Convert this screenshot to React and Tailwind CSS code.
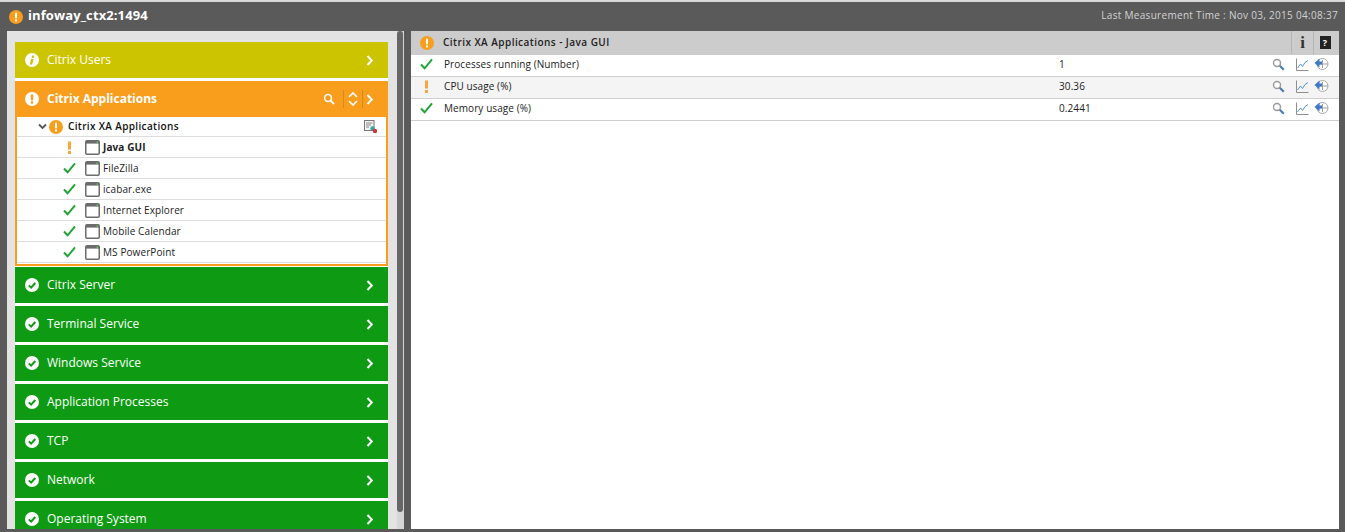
const F = "font-['Open_Sans','Noto_Sans',sans-serif]";

function Warn({ size = 14 }) {
  return (
    <svg width={size} height={size} viewBox="0 0 14 14" className="shrink-0">
      <circle cx="7" cy="7" r="7" fill="#f99d1c" />
      <rect x="6" y="2.6" width="2" height="5.8" rx="0.8" fill="#fff" />
      <rect x="6" y="9.4" width="2" height="2" fill="#fff" />
    </svg>
  );
}
function WhiteIcon({ kind }) {
  const c = kind === "warn" ? "#f99d1c" : kind === "info" ? "#cdc400" : "#0e9a12";
  return (
    <svg width="14" height="14" viewBox="0 0 14 14" className="shrink-0">
      <circle cx="7" cy="7" r="7" fill="#fff" />
      {kind === "warn" && (
        <>
          <rect x="5.8" y="2.4" width="2.4" height="6" rx="0.8" fill={c} />
          <rect x="5.8" y="9.4" width="2.4" height="2.2" fill={c} />
        </>
      )}
      {kind === "info" && (
        <>
          <path d="M6 6h2.6L7.2 11.4H4.9z" fill={c} />
          <circle cx="8" cy="3.7" r="1.3" fill={c} />
        </>
      )}
      {kind === "ok" && <path d="M3.8 7.4l2.3 2.2 4.2-4.6" fill="none" stroke={c} strokeWidth="2" />}
    </svg>
  );
}
function Chevron() {
  return (
    <svg width="8" height="11" viewBox="0 0 8 11" className="shrink-0">
      <path d="M1.5 1l4.3 4.5L1.5 10" fill="none" stroke="#fff" strokeWidth="2" />
    </svg>
  );
}
function Check() {
  return (
    <svg width="13" height="12" viewBox="0 0 13 12">
      <path d="M1 6.5l3.6 3.8L12 1.4" fill="none" stroke="#21a336" strokeWidth="2" />
    </svg>
  );
}
function Bang() {
  return (
    <svg width="13" height="13" viewBox="0 0 13 13">
      <rect x="5" y="0.5" width="3" height="8" fill="#f9a63a" />
      <rect x="5" y="10" width="3" height="3" fill="#f9a63a" />
    </svg>
  );
}
function Win() {
  return (
    <svg width="15" height="15" viewBox="0 0 15 15" className="shrink-0">
      <rect x="0.75" y="0.75" width="13.5" height="13.5" rx="1.2" fill="#fff" stroke="#6c6c6c" strokeWidth="1.5" />
      <rect x="1" y="1" width="13" height="2.6" fill="#6c6c6c" />
      <rect x="11.5" y="1.4" width="1.4" height="1.4" fill="#5fd35f" />
    </svg>
  );
}
function Mag() {
  return (
    <svg width="13" height="13" viewBox="0 0 13 13">
      <circle cx="5" cy="5" r="3.5" fill="#fff" stroke="#9a9a9a" strokeWidth="1.4" />
      <path d="M7.8 7.8l4 4" stroke="#4a7fb5" strokeWidth="2.2" />
    </svg>
  );
}
function Graph() {
  return (
    <svg width="13" height="13" viewBox="0 0 13 13">
      <path d="M0.5 0.5v12h12" fill="none" stroke="#8f8f8f" />
      <path d="M1.5 10l3-4 2 2.5 2.5-4 3-2" fill="none" stroke="#5b94cf" strokeWidth="1" />
    </svg>
  );
}
function Hist() {
  return (
    <svg width="15" height="14" viewBox="0 0 15 14">
      <circle cx="8.5" cy="7" r="5.5" fill="#fff" stroke="#a8a8a8" />
      <path d="M5 7H14M8.5 3V11" fill="none" stroke="#a0a0a0" />
      <path d="M0.5 6L5.5 1.5V4.5H8V7.5H5.5V10.5z" fill="#3f78c4" />
    </svg>
  );
}

function Card({ label, kind, color }) {
  return (
    <div className={`h-[36px] mb-[3px] flex items-center pl-[10px] pr-[14px] shrink-0 ${color}`}>
      <WhiteIcon kind={kind} />
      <span className="ml-[8px] text-[12px] font-medium text-white flex-1 leading-none">{label}</span>
      <Chevron />
    </div>
  );
}

const apps = [
  ["Java GUI", true],
  ["FileZilla"],
  ["icabar.exe"],
  ["Internet Explorer"],
  ["Mobile Calendar"],
  ["MS PowerPoint"],
];
const rows = [
  ["Processes running (Number)", "1", true, "bg-white"],
  ["CPU usage (%)", "30.36", false, "bg-[#f4f4f4]"],
  ["Memory usage (%)", "0.2441", true, "bg-white"],
];
const greens = ["Citrix Server", "Terminal Service", "Windows Service", "Application Processes", "TCP", "Network", "Operating System"];

export default function App() {
  return (
    <div className={`${F} w-[1345px] h-[532px] overflow-hidden bg-[#5a5a5a] border-t-2 border-[#d8d8d8] flex flex-col text-[10px]`}>
      <header className="h-[29px] shrink-0 flex items-center pl-[9px] pr-[7px]">
        <Warn />
        <span className="ml-[5px] -mt-[2px] text-[13px] tracking-[0.1px] font-bold text-white leading-none">infoway_ctx2:1494</span>
        <span className="ml-auto -mt-[3px] text-[10px] tracking-[0.3px] text-[#d2d2d2] leading-none">Last Measurement Time : Nov 03, 2015 04:08:37</span>
      </header>
      <main className="h-[498px] flex gap-[7px] pl-[7px] pr-[6px]">
        <aside className="w-[397px] bg-[#e3e3e3] flex">
          <div className="w-[390px] pl-[8px] pr-[9px] pt-[11px] overflow-hidden">
            <div className="bg-white">
              <Card label="Citrix Users" kind="info" color="bg-[#cdc400]" />
              <div className="mb-[1px] border-2 border-t-0 border-[#f99d1c] bg-white">
                <div className="-mx-[2px] h-[36px] bg-[#f99d1c] flex items-center pl-[10px] pr-[14px]">
                  <WhiteIcon kind="warn" />
                  <span className="ml-[8px] text-[12px] font-bold text-white flex-1 leading-none">Citrix Applications</span>
                  <svg width="12" height="12" viewBox="0 0 12 12">
                    <circle cx="5" cy="5" r="3.4" fill="none" stroke="#fff" strokeWidth="1.5" />
                    <path d="M7.5 7.5l3.5 3.5" stroke="#fff" strokeWidth="1.8" />
                  </svg>
                  <div className="ml-[8px] w-px h-[18px] bg-[#d98a1a]" />
                  <svg width="18" height="16" viewBox="0 0 18 16">
                    <path d="M5 6l4-4 4 4M5 10l4 4 4-4" fill="none" stroke="#fff" strokeWidth="1.6" />
                  </svg>
                  <div className="w-px h-[18px] bg-[#d98a1a] mr-[3px]" />
                  <Chevron />
                </div>
                <div className="h-[20px] flex items-center border-b border-[#ddd] pl-[21px] pr-[8px]">
                  <svg width="9" height="7" viewBox="0 0 9 7">
                    <path d="M1 1.5l3.5 3.5L8 1.5" fill="none" stroke="#555" strokeWidth="1.8" />
                  </svg>
                  <span className="ml-[2px]"><Warn size={14} /></span>
                  <span className="ml-[5px] -mt-[2px] text-[10px] tracking-[0.35px] font-semibold text-[#111] flex-1 leading-none">Citrix XA Applications</span>
                  <svg width="14" height="14" viewBox="0 0 14 14">
                    <rect x="0.5" y="0.5" width="9.5" height="10" fill="#f3f3f3" stroke="#777" />
                    <path d="M2 3h6.5M2 5h5M2 7h3" stroke="#888" />
                    <circle cx="8.5" cy="8.5" r="2.2" fill="#3aa0a0" />
                    <circle cx="11" cy="11" r="2.2" fill="#dd2b3a" />
                  </svg>
                </div>
                {apps.map(([name, warn]) => (
                  <div key={name} className="h-[21px] flex items-center border-b border-[#ddd] pl-[46px]">
                    <span className="w-[13px] flex justify-center">{warn ? <Bang /> : <Check />}</span>
                    <span className="ml-[9px]"><Win /></span>
                    <span className={`ml-[3px] text-[10px] tracking-[0.1px] text-[#222] leading-none ${warn ? "font-bold" : ""}`}>{name}</span>
                  </div>
                ))}
                <div className="h-[1px]" />
              </div>
              {greens.map((g) => (
                <Card key={g} label={g} kind="ok" color="bg-[#0e9a12]" />
              ))}
            </div>
          </div>
          <div className="w-[7px] bg-[#d6d6d6]">
            <div className="h-[481px] w-[6px] bg-[#666] rounded-[3px]" />
          </div>
        </aside>
        <section className="flex-1 bg-white">
          <div className="h-[24px] pb-[1px] bg-[#cccccc] flex items-center pl-[9px]">
            <Warn />
            <span className="ml-[9px] -mt-[1px] text-[10px] tracking-[0.45px] font-semibold text-[#222] flex-1 leading-none">Citrix XA Applications - Java GUI</span>
            <div className="w-[22px] h-full border-l border-[#b5b5b5] flex items-center justify-center text-[17px] font-bold text-[#333] font-['Liberation_Serif',serif]">i</div>
            <div className="w-[26px] h-full border-l border-[#b5b5b5] flex items-center justify-center pr-[3px]">
              <div className="w-[11px] h-[13px] bg-[#222] text-white text-[9px] font-bold flex items-center justify-center leading-none">?</div>
            </div>
          </div>
          {rows.map(([name, val, ok, bg]) => (
            <div key={name} className={`h-[22px] pb-[3px] flex items-center border-b border-[#cfcfcf] ${bg}`}>
              <span className="w-[33px] pl-[9px] flex justify-start">{ok ? <Check /> : <Bang />}</span>
              <span className="text-[10px] tracking-[0.08px] text-[#222] w-[615px] leading-none">{name}</span>
              <span className="text-[10px] tracking-[0.1px] text-[#222] flex-1 leading-none">{val}</span>
              <div className="flex items-center gap-[11px] pr-[10px]">
                <Mag />
                <span className="flex items-center gap-[5px]"><Graph /><Hist /></span>
              </div>
            </div>
          ))}
        </section>
      </main>
    </div>
  );
}
